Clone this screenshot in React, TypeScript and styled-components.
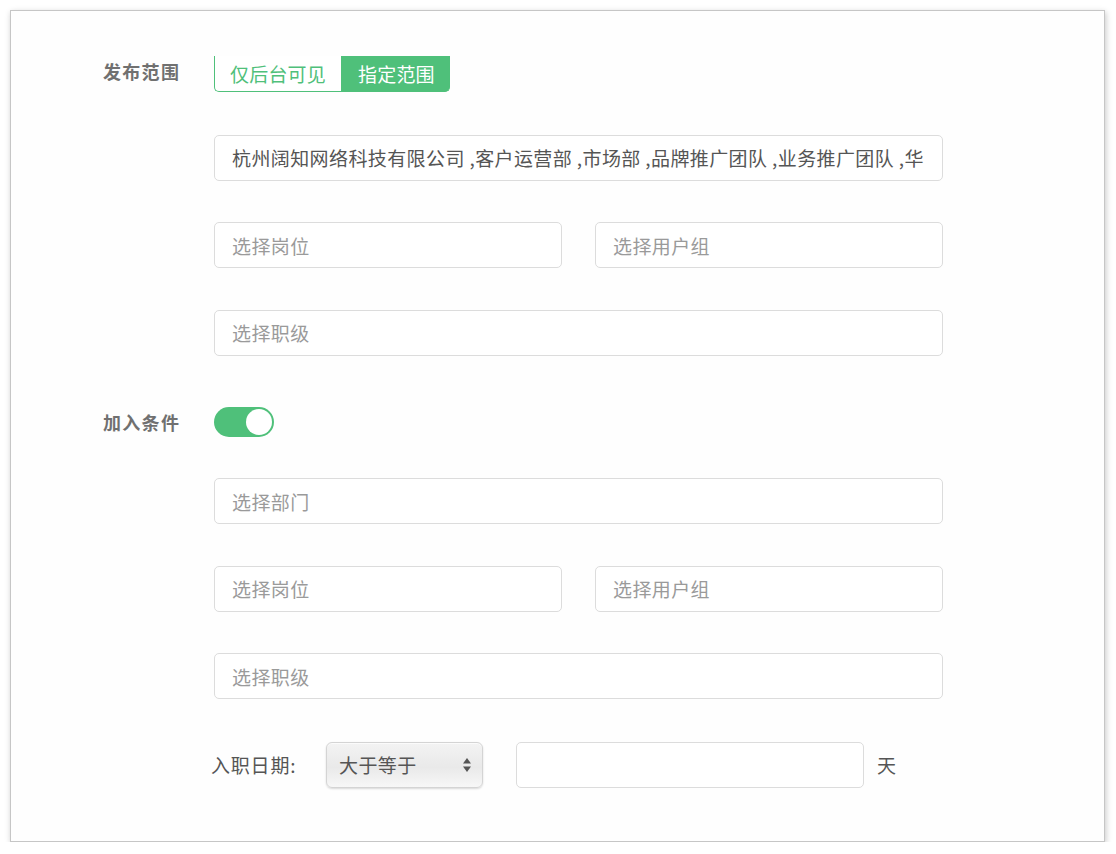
import React, { useState } from "react";
import styled, { createGlobalStyle } from "styled-components";

const GlobalStyle = createGlobalStyle`
  html, body {
    margin: 0;
    padding: 0;
    background: #ffffff;
  }
  body {
    font-family: "Noto Sans CJK SC", "Noto Sans", sans-serif;
  }
`;

const green = "#4fc07a";

const Page = styled.div`
  padding: 10px 0 0 10px;
`;

const Card = styled.div`
  box-sizing: border-box;
  width: 1095px;
  height: 832px;
  background: #fefefe;
  border: 1px solid #c6c6c6;
  box-shadow: 1px 2px 6px rgba(0, 0, 0, 0.22);
  padding: 45px 0 0 92px;
  display: flex;
  flex-direction: column;
  gap: 51px;
`;

const Section = styled.div`
  display: grid;
  grid-template-columns: 111px 729px;
  align-items: start;
`;

const Label = styled.div`
  font-size: 18px;
  line-height: 30px;
  font-weight: 700;
  color: #707070;
  letter-spacing: 1.3px;
`;

const Controls = styled.div`
  display: flex;
  flex-direction: column;
  gap: 41.5px;
`;

const Segmented = styled.div`
  display: flex;
  height: 36px;
  margin-bottom: 1px;
`;

const SegmentButton = styled.button<{ $active?: boolean }>`
  box-sizing: border-box;
  height: 36px;
  padding: 0 ${({ $active }) => ($active ? "14px 0 16px" : "15px 0 15px")};
  font-family: inherit;
  font-size: 19px;
  letter-spacing: 0.2px;
  cursor: pointer;
  border: 1px solid ${green};
  border-top: none;
  background: ${({ $active }) => ($active ? green : "#ffffff")};
  color: ${({ $active }) => ($active ? "#ffffff" : green)};
  border-radius: ${({ $active }) => ($active ? "0 0 5px 0" : "0 0 0 5px")};
  ${({ $active }) => ($active ? "" : "border-right: none;")}
`;

const Row = styled.div`
  display: flex;
  gap: 33px;
  align-items: center;
`;

const Field = styled.input<{ $half?: boolean }>`
  box-sizing: border-box;
  width: ${({ $half }) => ($half ? "348px" : "729px")};
  height: 46px;
  padding: 0 17px;
  border: 1px solid #dcdcdc;
  border-radius: 5px;
  background: #fff;
  font-family: inherit;
  font-size: 19px;
  letter-spacing: 0.4px;
  color: #555;
  outline: none;

  &::placeholder {
    color: #9a9a9a;
  }
`;

const Toggle = styled.button<{ $on: boolean }>`
  position: relative;
  width: 60px;
  height: 30px;
  border: none;
  border-radius: 15px;
  padding: 0;
  cursor: pointer;
  background: ${({ $on }) => ($on ? green : "#d8d8d8")};
`;

const Knob = styled.span<{ $on: boolean }>`
  position: absolute;
  top: 2px;
  left: ${({ $on }) => ($on ? "32px" : "2px")};
  width: 26px;
  height: 26px;
  border-radius: 50%;
  background: #fff;
`;

const DateRow = styled.div`
  display: flex;
  align-items: center;
  margin-left: -3px;
  margin-top: 1px;
`;

const DateLabel = styled.span`
  width: 115px;
  font-size: 19px;
  font-weight: 400;
  letter-spacing: 0.8px;
  color: #555;
`;

const Select = styled.div`
  box-sizing: border-box;
  width: 157px;
  height: 46px;
  display: flex;
  align-items: center;
  justify-content: space-between;
  padding: 0 10px 0 12px;
  border: 1px solid #d4d4d4;
  border-radius: 6px;
  background: linear-gradient(#f3f3f3, #e9e9e9 55%, #f7f7f7);
  box-shadow: inset 0 1px 0 #fbfbfb, 0 1px 2px rgba(0, 0, 0, 0.15);
  font-size: 19px;
  letter-spacing: 0.4px;
  color: #555;
  margin-right: 33px;
`;

const Unit = styled.span`
  font-size: 19px;
  color: #555;
  margin-left: 13px;
`;

const Arrows = () => (
  <svg width="10" height="16" viewBox="0 0 10 16">
    <path d="M5 1 L9 6.5 H1 Z" fill="#555" />
    <path d="M5 15 L9 9.5 H1 Z" fill="#555" />
  </svg>
);

const scopeText =
  "杭州阔知网络科技有限公司 ,客户运营部 ,市场部 ,品牌推广团队 ,业务推广团队 ,华东销售部 ,华南销售部";

export default function App() {
  const [scope, setScope] = useState<"backend" | "custom">("custom");
  const [join, setJoin] = useState(true);

  return (
    <Page>
      <GlobalStyle />
      <Card>
        <Section>
          <Label>发布范围</Label>
          <Controls>
            <Segmented>
              <SegmentButton
                $active={scope === "backend"}
                onClick={() => setScope("backend")}
              >
                仅后台可见
              </SegmentButton>
              <SegmentButton
                $active={scope === "custom"}
                onClick={() => setScope("custom")}
              >
                指定范围
              </SegmentButton>
            </Segmented>
            <Field readOnly value={scopeText} />
            <Row>
              <Field $half placeholder="选择岗位" />
              <Field $half placeholder="选择用户组" />
            </Row>
            <Field placeholder="选择职级" />
          </Controls>
        </Section>

        <Section>
          <Label>加入条件</Label>
          <Controls>
            <Toggle $on={join} onClick={() => setJoin(!join)}>
              <Knob $on={join} />
            </Toggle>
            <Field placeholder="选择部门" />
            <Row>
              <Field $half placeholder="选择岗位" />
              <Field $half placeholder="选择用户组" />
            </Row>
            <Field placeholder="选择职级" />
            <DateRow>
              <DateLabel>入职日期:</DateLabel>
              <Select>
                大于等于
                <Arrows />
              </Select>
              <Field $half />
              <Unit>天</Unit>
            </DateRow>
          </Controls>
        </Section>
      </Card>
    </Page>
  );
}
